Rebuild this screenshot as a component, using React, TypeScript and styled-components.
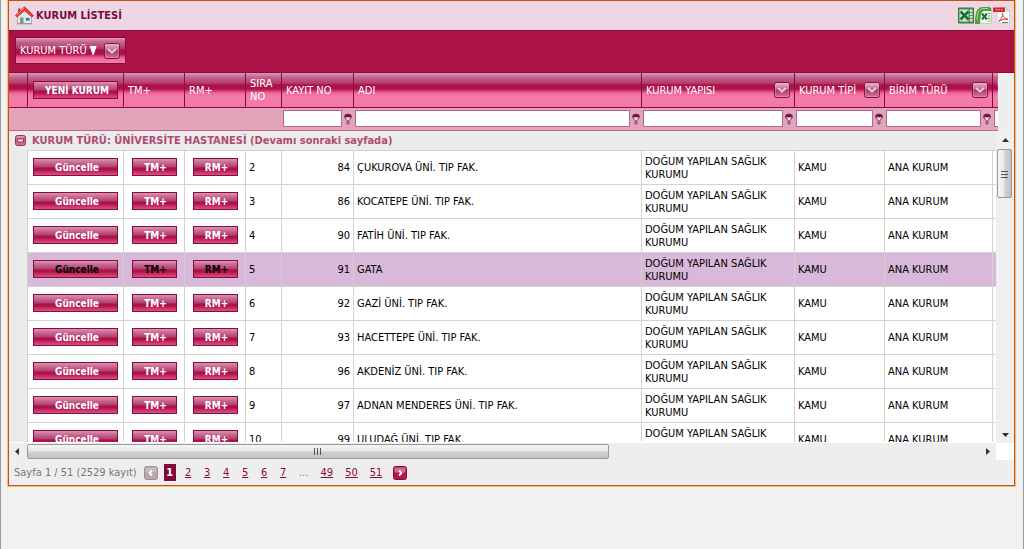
import React from 'react';
import styled, { createGlobalStyle, css } from 'styled-components';

const FONT = '"DejaVu Sans Condensed", "DejaVu Sans", "Noto Sans", sans-serif';
const WINE = '#8b0a3c';
const HEAD_GRADIENT =
  'linear-gradient(#dd9ab5 0, #c4668c 4px, #b53e6d 10px, #a9134a 12px, #b01148 16px, #ee6797 20px, #f47ca8 24px, #f379a5 100%)';
const BUTTON_GRADIENT =
  'linear-gradient(#dc93b0 0, #c87095 3px, #b43d6e 8px, #a8114a 9px, #b3124d 11px, #c52f65 13px, #d9527f 100%)';

const GlobalStyle = createGlobalStyle`
  *, *::before, *::after { box-sizing: border-box; }
  body {
    margin: 0;
    background: #f1f1f1;
    font: 11px/13px ${FONT};
    color: #000;
  }
  button, input { font: inherit; margin: 0; padding: 0; }
`;

const Page = styled.div`
  min-height: 100vh;
  padding: 0 8px 24px 7px;
  border: solid #999;
  border-width: 0 1px;
`;

const Panel = styled.main`
  border: 1px solid #c0521c;
  box-shadow: 0 0 0 1px #f3c170;
  background: #eeeeee;
`;

const TitleBar = styled.header`
  display: flex;
  align-items: center;
  justify-content: space-between;
  height: 30px;
  padding: 0 4px 0 6px;
  background: #eed7e3;
  border-bottom: 1px solid ${WINE};
`;

const Title = styled.h1`
  display: flex;
  align-items: center;
  gap: 2px;
  margin: 0;
  font-size: 11px;
  font-weight: bold;
  color: #7d0b3c;
`;

const Exports = styled.div`
  display: flex;
  gap: 1px;
`;

const IconButton = styled.button`
  display: block;
  flex: none;
  border: 0;
  background: none;
  line-height: 0;
  cursor: pointer;
`;

const GroupBar = styled.div`
  display: flex;
  align-items: center;
  height: 42px;
  padding: 0 6px 2px;
  background: #ab1246;
  border-bottom: 1px solid ${WINE};
`;

const GroupChip = styled.div`
  display: flex;
  align-items: center;
  height: 27px;
  padding: 0 5px 0 4px;
  border: 1px solid ${WINE};
  background: ${HEAD_GRADIENT};
  color: #fff;
`;

const ChipLabel = styled.span`
  margin-right: 3px;
`;

const ChipArrow = styled.span`
  width: 7px;
  height: 9px;
  margin-right: 7px;
  background: #fff;
  clip-path: polygon(0 0, 100% 0, 57% 100%, 43% 100%);
`;

const HeadWrap = styled.div`
  padding-right: 16px;
`;

const Clip = styled.div`
  overflow: hidden;
`;

const Table = styled.table`
  width: 1120px;
  table-layout: fixed;
  border-collapse: separate;
  border-spacing: 0;
`;

const HeadCell = styled.th`
  height: 35px;
  padding: 0 4px;
  border-left: 1px solid ${WINE};
  border-bottom: 1px solid ${WINE};
  background: ${HEAD_GRADIENT};
  color: #fff;
  font-weight: normal;
  text-align: left;
  &:first-child { border-left: 0; }
`;

const HeadContent = styled.div`
  display: flex;
  align-items: center;
  justify-content: space-between;
  white-space: pre-line;
`;

const FilterCell = styled.td`
  height: 23px;
  padding: 0 1px 1px 2px;
  background: #e2a4bb;
  border-bottom: 1px solid #bf6a8b;
`;

const FilterBox = styled.div`
  display: flex;
  align-items: center;
  gap: 2px;
`;

const FilterInput = styled.input`
  flex: 1;
  min-width: 0;
  height: 17px;
  border: 1px solid #b8668b;
  background: #fff;
  outline: 0;
`;

const BodyWrap = styled.div`
  display: grid;
  grid-template-columns: minmax(0, 1fr) 17px;
  height: 312px;
`;

const BodyClip = styled(Clip)`
  margin-right: 1px;
  border-bottom: 1px solid #fff;
`;

const GroupCell = styled.td`
  height: 19px;
  padding: 0 6px;
  background: #ebebeb;
  color: #b04a72;
  font-weight: bold;
`;

const GroupTitle = styled.div`
  display: flex;
  align-items: center;
  gap: 6px;
`;

const Row = styled.tr<{ $hot?: boolean }>`
  background: ${(p) => (p.$hot ? '#d9b9d9' : '#fff')};
`;

const Cell = styled.td<{ $align?: string }>`
  height: 34px;
  padding: 0 3px;
  border-left: 1px solid #d3d3d3;
  border-top: 1px solid #d3d3d3;
  text-align: ${(p) => p.$align || 'left'};
`;

const IndentCell = styled.td`
  background: #ebebeb;
`;

const ActionButton = styled.button<{ $wide?: boolean; $dark?: boolean }>`
  display: block;
  width: ${(p) => (p.$wide ? 85 : 45)}px;
  height: 18px;
  margin: 0 auto 1px;
  padding: 1px 0 0 3px;
  border: 1px solid ${WINE};
  background: ${BUTTON_GRADIENT};
  color: ${(p) => (p.$dark ? '#000' : '#fff')};
  font-size: 10px;
  font-weight: bold;
  line-height: 15px;
  text-align: center;
  white-space: nowrap;
  cursor: pointer;
`;

const Vertical = styled.div`
  display: flex;
  flex-direction: column;
  align-items: flex-start;
  background: #f0f0f0;
`;

const Horizontal = styled.div`
  display: flex;
  align-items: center;
  height: 17px;
  margin-right: 18px;
  background: #eeeeee;
`;

const Corner = styled.div`
  background: linear-gradient(to left, #fff 18px, transparent 18px);
`;

const Arrow = styled(IconButton)`
  width: 17px;
  height: 17px;
  display: flex;
  align-items: center;
  justify-content: center;
`;

const thumb = css`
  display: flex;
  align-items: center;
  justify-content: center;
  border: 1px solid #979797;
  border-radius: 2px;
`;

const VThumb = styled.div`
  ${thumb}
  width: 15px;
  height: 49px;
  margin-top: 1px;
  margin-bottom: auto;
  background: linear-gradient(to right, #f5f5f5, #e8e8e9 45%, #cfcfd2 55%, #c2c3c6);
`;

const HThumb = styled.div`
  ${thumb}
  width: 59%;
  height: 15px;
  margin: 0 auto 0 1px;
  background: linear-gradient(#f5f5f5, #e8e8e9 45%, #cfcfd2 55%, #c2c3c6);
`;

const Pager = styled.nav`
  display: flex;
  align-items: center;
  height: 25px;
  padding: 0 5px;
  line-height: 17px;
  color: #777;
`;

const Pages = styled.div`
  display: flex;
  gap: 6px;
  margin: 0 8px 0 6px;
`;

const PageLink = styled.a`
  min-width: 13px;
  padding: 0 3px;
  color: ${WINE};
  text-align: center;
`;

const CurrentPage = styled.span`
  width: 12px;
  text-align: center;
  background: #82083a;
  color: #fff;
  font-weight: bold;
`;

const Dots = styled.span`
  padding: 0 3px;
`;

const Summary = styled.span`
  margin-right: 7px;
  white-space: nowrap;
`;

const HouseIcon = () => (
  <svg width="19" height="19" viewBox="0 0 19 19" aria-hidden="true">
    <path d="M2.500 9.500 9.500 4l7 5.500v8h-14z" fill="#e2e8ea" stroke="#9aa5a6" strokeWidth=".8" />
    <path d="M3 2.500h2.500v4H3z" fill="#c23a34" />
    <path d="M9.500 .5 18.700 9.500 17 11.200 9.500 4.800 2 11.200 .3 9.500z" fill="#e23a34" stroke="#b92a26" strokeWidth=".5" />
    <path d="M9.500 1.500 2 8.800" stroke="#ff8a80" strokeWidth="1" />
    <path d="M5 11.500h3.500V18H5z" fill="#8d9484" />
    <path d="M10.500 11.500h4.500V15h-4.500z" fill="#3f78b5" stroke="#f5f5f5" strokeWidth=".6" />
    <path d="M2 17.800h15" stroke="#8a9a80" />
  </svg>
);

const ExcelIcon = () => (
  <svg width="16" height="17" viewBox="0 0 16 17" aria-hidden="true">
    <path d="M.5 1h15v15H.5z" fill="#4c9358" stroke="#2f7a3a" />
    <path d="M1.500 2.500h9v12h-9z" fill="#cfe2cd" />
    <path d="M12 2.500h2.500v12H12z" fill="#d8ead6" />
    <path d="M12 5.500h3M12 8.500h3M12 11.500h3" stroke="#4c9358" />
    <path d="M2.500 4.500l8 8M10.500 4.500l-8 8" stroke="#1f6d31" strokeWidth="2.600" />
  </svg>
);

const ExcelXIcon = () => (
  <svg width="17" height="17" viewBox="0 0 17 17" aria-hidden="true">
    <path d="M5 3.500h11.500v13H5z" fill="#f3f9ee" stroke="#b9d8b0" />
    <path d="M13 6.500h2.500M13 9h2.500M13 11.500h2.500M13 14h2.500" stroke="#6aa85c" />
    <path d="M.5 16.500C.5 7 1.500 1 7 .5h7c1.500 0 2 1 2 3H9C5.500 4 5 9 4.500 16.500z" fill="#4b9f3c" stroke="#2b7a2a" strokeWidth=".6" />
    <path d="M2 13C2.200 6 3.500 2 8 1.600h5" fill="none" stroke="#a8dc8e" />
    <path d="M7 6.500l5 6M12 6.500l-5 6" stroke="#1f6d31" strokeWidth="2" />
  </svg>
);

const PdfIcon = () => (
  <svg width="17" height="17" viewBox="0 0 17 17" aria-hidden="true">
    <path d="M4 .5h9.500L16.500 4v12.500H4z" fill="#fafafa" stroke="#d2d2d2" />
    <path d="M13 .5V4h3.500z" fill="#ddd" stroke="#bbb" strokeWidth=".5" />
    <path d="M0 .5h12V5H0z" fill="#d6252b" />
    <path d="M2.500 2.700h7" stroke="#f0a5a8" strokeDasharray="2 .7" />
    <path d="M5.500 14.500C8 12.500 10 9 9.700 6.500c-.6 2.500 2 5.500 5.300 5.800-3-.8-6.500.2-9.500 2.200z" fill="none" stroke="#d8363a" />
    <path d="M9 15.500h6" stroke="#777" />
  </svg>
);

const DropIcon = () => (
  <svg width="16" height="16" viewBox="0 0 16 16" aria-hidden="true">
    <defs>
      <linearGradient id="drop" x1="0" y1="0" x2="0" y2="1">
        <stop offset="0" stopColor="#e6b9cb" />
        <stop offset=".4" stopColor="#c27597" />
        <stop offset=".5" stopColor="#a83a66" />
        <stop offset="1" stopColor="#d77a9d" />
      </linearGradient>
    </defs>
    <rect x=".5" y=".5" width="15" height="15" rx="2" fill="url(#drop)" stroke="#87103e" />
    <rect x="1.500" y="1.500" width="13" height="13" rx="1" fill="none" stroke="#e9b4c9" strokeOpacity=".35" />
    <path d="M4 6 8 9.500 12 6" fill="none" stroke="#f3cddb" strokeWidth="1.800" />
  </svg>
);

const FunnelIcon = () => (
  <svg width="8" height="12" viewBox="0 0 8 12" aria-hidden="true">
    <path d="M.8 4.500 3 7.500v3.500h2V7.500l2.200-3z" fill="#c0809a" stroke="#8a3a5f" strokeWidth=".8" />
    <ellipse cx="4" cy="3.500" rx="3.700" ry="2.700" fill="#6d1a3f" />
    <path d="M1.200 4.200h5.600L4.800 7H3.200z" fill="#f8e4ec" />
    <path d="M3 2.200h2v2H3z" fill="#6d1a3f" />
  </svg>
);

const CollapseIcon = () => (
  <svg width="11" height="11" viewBox="0 0 11 11" aria-hidden="true">
    <rect x=".5" y=".5" width="10" height="10" rx="2" fill="#cf6f93" stroke="#98305c" />
    <rect x="2.500" y="4" width="6" height="3" fill="#fbe6ee" stroke="#98305c" />
    <path d="M2 1.800h7" stroke="#e7abc2" />
  </svg>
);

const StepIcon = ({ dir, off }: { dir: 'prev' | 'next'; off?: boolean }) => (
  <svg width="14" height="14" viewBox="0 0 14 14" aria-hidden="true">
    <rect x=".5" y=".5" width="13" height="13" rx="2" fill={off ? '#b9a3ad' : '#b5164f'} stroke={off ? '#a08c96' : '#8b0a3c'} />
    <path d="M1.500 1.500h11v5h-11z" fill={off ? '#cbb9c2' : '#cf6a91'} />
    <path d={dir === 'prev' ? 'M8 4.500 5.500 7 8 9.500' : 'M6 4.500 8.500 7 6 9.500'} fill="none" stroke="#fff" strokeWidth="1.800" />
  </svg>
);

const TRIANGLES = { up: 'M0 6l3.500-4L7 6z', down: 'M0 2h7L3.500 6z', left: 'M5 0v7L1 3.500z', right: 'M2 0v7l4-3.500z' };
const Triangle = ({ dir }: { dir: keyof typeof TRIANGLES }) => (
  <svg width="7" height="7" viewBox="0 0 7 7" aria-hidden="true">
    <path d={TRIANGLES[dir]} fill="#333" />
  </svg>
);

const Grip = ({ vertical }: { vertical?: boolean }) => (
  <svg width="8" height="8" viewBox="0 0 8 8" aria-hidden="true">
    <path d={vertical ? 'M0 1.500h7M0 4.500h7M0 7.500h7' : 'M.5 0v7M3.500 0v7M6.500 0v7'} stroke="#555" />
  </svg>
);

const WIDTHS = [18, 96, 61, 61, 36, 72, 288, 153, 90, 108, 137];
const Columns = () => (
  <colgroup>
    {WIDTHS.map((w, i) => (
      <col key={i} width={w} />
    ))}
  </colgroup>
);

const HEADERS: { label: string; drop?: boolean }[] = [
  { label: 'TM+' },
  { label: 'RM+' },
  { label: 'SIRA NO' },
  { label: 'KAYIT NO' },
  { label: 'ADI' },
  { label: 'KURUM YAPISI', drop: true },
  { label: 'KURUM TİPİ', drop: true },
  { label: 'BİRİM TÜRÜ', drop: true },
  { label: 'BAĞLI\nKURUM' },
];
const FILTERS = ['KAYIT NO', 'ADI', 'KURUM YAPISI', 'KURUM TİPİ', 'BİRİM TÜRÜ', 'BAĞLI KURUM'];

const ROWS: [number, number, string][] = [
  [2, 84, 'ÇUKUROVA ÜNİ. TIP FAK.'],
  [3, 86, 'KOCATEPE ÜNİ. TIP FAK.'],
  [4, 90, 'FATİH ÜNİ. TIP FAK.'],
  [5, 91, 'GATA'],
  [6, 92, 'GAZİ ÜNİ. TIP FAK.'],
  [7, 93, 'HACETTEPE ÜNİ. TIP FAK.'],
  [8, 96, 'AKDENİZ ÜNİ. TIP FAK.'],
  [9, 97, 'ADNAN MENDERES ÜNİ. TIP FAK.'],
  [10, 99, 'ULUDAĞ ÜNİ. TIP FAK.'],
];

export default function App() {
  return (
    <Page>
      <GlobalStyle />
      <Panel>
        <TitleBar>
          <Title>
            <HouseIcon />
            KURUM LİSTESİ
          </Title>
          <Exports>
            <IconButton aria-label="XLS"><ExcelIcon /></IconButton>
            <IconButton aria-label="XLSX"><ExcelXIcon /></IconButton>
            <IconButton aria-label="PDF"><PdfIcon /></IconButton>
          </Exports>
        </TitleBar>

        <GroupBar>
          <GroupChip>
            <ChipLabel>KURUM TÜRÜ</ChipLabel>
            <ChipArrow />
            <IconButton aria-label="KURUM TÜRÜ"><DropIcon /></IconButton>
          </GroupChip>
        </GroupBar>

        <HeadWrap>
          <Clip>
            <Table>
              <Columns />
              <thead>
                <tr>
                  <HeadCell />
                  <HeadCell>
                    <ActionButton $wide>YENİ KURUM</ActionButton>
                  </HeadCell>
                  {HEADERS.map((h) => (
                    <HeadCell key={h.label}>
                      <HeadContent>
                        {h.label}
                        {h.drop && <IconButton aria-label={h.label}><DropIcon /></IconButton>}
                      </HeadContent>
                    </HeadCell>
                  ))}
                </tr>
              </thead>
              <tbody>
                <tr>
                  <FilterCell colSpan={5} />
                  {FILTERS.map((f) => (
                    <FilterCell key={f}>
                      <FilterBox>
                        <FilterInput type="text" aria-label={f} />
                        <IconButton aria-label={`${f} filtre`}><FunnelIcon /></IconButton>
                      </FilterBox>
                    </FilterCell>
                  ))}
                </tr>
              </tbody>
            </Table>
          </Clip>
        </HeadWrap>

        <BodyWrap>
          <BodyClip>
            <Table>
              <Columns />
              <tbody>
                <tr>
                  <GroupCell colSpan={11}>
                    <GroupTitle>
                      <IconButton aria-label="Daralt"><CollapseIcon /></IconButton>
                      KURUM TÜRÜ: ÜNİVERSİTE HASTANESİ (Devamı sonraki sayfada)
                    </GroupTitle>
                  </GroupCell>
                </tr>
                {ROWS.map(([no, id, name]) => (
                  <Row key={no} $hot={no === 5}>
                    <IndentCell />
                    <Cell><ActionButton $wide $dark={no === 5}>Güncelle</ActionButton></Cell>
                    <Cell><ActionButton $dark={no === 5}>TM+</ActionButton></Cell>
                    <Cell><ActionButton $dark={no === 5}>RM+</ActionButton></Cell>
                    <Cell>{no}</Cell>
                    <Cell $align="right">{id}</Cell>
                    <Cell>{name}</Cell>
                    <Cell>DOĞUM YAPILAN SAĞLIK KURUMU</Cell>
                    <Cell>KAMU</Cell>
                    <Cell>ANA KURUM</Cell>
                    <Cell />
                  </Row>
                ))}
              </tbody>
            </Table>
          </BodyClip>
          <Vertical>
            <Arrow aria-label="Yukarı"><Triangle dir="up" /></Arrow>
            <VThumb><Grip vertical /></VThumb>
            <Arrow aria-label="Aşağı"><Triangle dir="down" /></Arrow>
          </Vertical>
        </BodyWrap>

        <Corner>
          <Horizontal>
            <Arrow aria-label="Sola"><Triangle dir="left" /></Arrow>
            <HThumb><Grip /></HThumb>
            <Arrow aria-label="Sağa"><Triangle dir="right" /></Arrow>
          </Horizontal>
        </Corner>

        <Pager>
          <Summary>Sayfa 1 / 51 (2529 kayıt)</Summary>
          <IconButton aria-label="Önceki" disabled><StepIcon dir="prev" off /></IconButton>
          <Pages>
            <CurrentPage>1</CurrentPage>
            {[2, 3, 4, 5, 6, 7].map((n) => (
              <PageLink key={n} href={`#${n}`}>{n}</PageLink>
            ))}
            <Dots>…</Dots>
            {[49, 50, 51].map((n) => (
              <PageLink key={n} href={`#${n}`}>{n}</PageLink>
            ))}
          </Pages>
          <IconButton aria-label="Sonraki"><StepIcon dir="next" /></IconButton>
        </Pager>
      </Panel>
    </Page>
  );
}
